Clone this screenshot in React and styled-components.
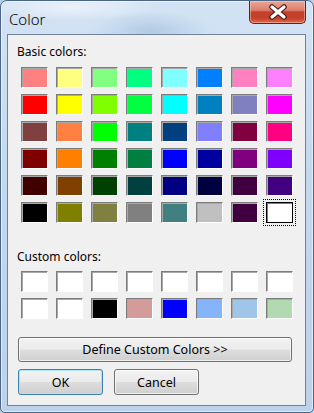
import React from 'react'
import styled, { createGlobalStyle } from 'styled-components';

const GlobalStyle = createGlobalStyle`
  html, body {
    margin: 0;
    padding: 0;
    background: #b9cfe6;
  }
  body {
    font-family: "Noto Sans", "Liberation Sans", sans-serif;
    font-size: 12px;
    color: #000;
  }
`;

const basic = [
  ['#ff8080', '#ffff80', '#80ff80', '#00ff80', '#80ffff', '#0080ff', '#ff80c0', '#ff80ff'],
  ['#ff0000', '#ffff00', '#80ff00', '#00ff40', '#00ffff', '#0080c0', '#8080c0', '#ff00ff'],
  ['#804040', '#ff8040', '#00ff00', '#008080', '#004080', '#8080ff', '#800040', '#ff0080'],
  ['#800000', '#ff8000', '#008000', '#008040', '#0000ff', '#0000a0', '#800080', '#8000ff'],
  ['#400000', '#804000', '#004000', '#004040', '#000080', '#000040', '#400040', '#400080'],
  ['#000000', '#808000', '#808040', '#808080', '#408080', '#c0c0c0', '#400040', '#ffffff'],
];

const custom = [
  ['#ffffff', '#ffffff', '#ffffff', '#ffffff', '#ffffff', '#ffffff', '#ffffff', '#ffffff'],
  ['#ffffff', '#ffffff', '#000000', '#d49b9b', '#0000ff', '#85b4fb', '#9fc6e9', '#b1dab0'],
];

const Window = styled.div`
  box-sizing: border-box;
  width: 314px;
  height: 413px;
  display: flex;
  flex-direction: column;
  padding: 0 7px 6px 6px;
  border: 1px solid #4a6684;
  border-radius: 7px 7px 5px 5px;
  background:
    radial-gradient(ellipse 90px 14px at 70px 6px, rgba(255,255,255,0.55), transparent),
    radial-gradient(ellipse 60px 20px at 150px 30px, rgba(150,180,215,0.5), transparent),
    linear-gradient(180deg, #d3e3f4 0%, #c4d8ee 40%, #bcd2ea 100%);
  box-shadow: inset 0 0 0 1px rgba(255,255,255,0.55);
  overflow: hidden;
`;

const TitleBar = styled.div`
  height: 33px;
  display: flex;
  justify-content: space-between;
  align-items: flex-start;
`;

const Title = styled.div`
  font-size: 15px;
  font-weight: 300;
  padding: 8px 0 0 2px;
  color: #000;
`;

const CloseButton = styled.div`
  width: 57px;
  height: 23px;
  box-sizing: border-box;
  display: flex;
  align-items: center;
  justify-content: center;
  border: 1px solid #5e2419;
  border-top: none;
  border-radius: 0 0 5px 5px;
  background: linear-gradient(180deg, #e9a797 0%, #dc7e6c 42%, #c3402a 50%, #c5412a 78%, #e0694c 100%);
  box-shadow: inset 0 0 0 1px rgba(255,220,210,0.45);
`;

const Client = styled.div`
  flex: 1;
  display: flex;
  flex-direction: column;
  align-items: flex-start;
  background: #f0f0f0;
  border: 1px solid #6f8298;
  padding: 9px 0 0 10px;
`;

const Label = styled.div`
  line-height: 15px;
  margin: ${p => p.$top || 0}px 0 0 -1px;
`;

const Grid = styled.div`
  display: grid;
  grid-template-columns: repeat(8, 27px);
  grid-auto-rows: 21px;
  column-gap: 8px;
  row-gap: 6px;
  margin: ${p => p.$top}px 0 0 3px;
`;

const Swatch = styled.div`
  box-sizing: border-box;
  background: ${p => p.$color};
  border: 1px solid;
  border-color: #7c7c7c #ffffff #ffffff #7c7c7c;
  box-shadow: inset 1px 1px 0 #a8a8a8;

  ${p => p.$selected && `
    border: 1px solid #000;
    box-shadow: inset 1px 1px 0 #7c7c7c;
    outline: 1px dotted #000;
    outline-offset: 2px;
  `}
`;

const Button = styled.div`
  box-sizing: border-box;
  width: ${p => p.$w}px;
  height: ${p => p.$h}px;
  display: flex;
  align-items: center;
  justify-content: center;
  font-size: 12.5px;
  border: 1px solid ${p => (p.$default ? '#3c7fb1' : '#707070')};
  border-radius: 3px;
  background: linear-gradient(180deg, #f2f2f2 0%, #ebebeb 48%, #dddddd 52%, #cfcfcf 100%);
  box-shadow: inset 0 0 0 1px ${p => (p.$default ? '#aee4f7' : 'rgba(255,255,255,0.7)')};
  color: #000;
`;

const ButtonRow = styled.div`
  display: flex;
  gap: 11px;
  margin-top: 7px;
`;

const Section = styled.div`
  margin-top: ${p => p.$top}px;
`;

const CloseIcon = () => (
  <svg width="20" height="16" viewBox="0 0 20 16">
    <path d="M4 3 L16 13 M16 3 L4 13" stroke="#4a1d16" strokeWidth="5.5" strokeLinecap="round" />
    <path d="M4 3 L16 13 M16 3 L4 13" stroke="#ffffff" strokeWidth="3.2" strokeLinecap="round" />
  </svg>
);

const App = () => {
  return (
    <>
      <GlobalStyle />
      <Window>
        <TitleBar>
          <Title>Color</Title>
          <CloseButton><CloseIcon /></CloseButton>
        </TitleBar>
        <Client>
          <Label>Basic colors:</Label>
          <Grid $top={8}>
            {basic.flat().map((c, i) => (
              <Swatch key={i} $color={c} $selected={i === 47} />
            ))}
          </Grid>
          <Label $top={26}>Custom colors:</Label>
          <Grid $top={7}>
            {custom.flat().map((c, i) => (
              <Swatch key={i} $color={c} />
            ))}
          </Grid>
          <Section $top={18}>
            <Button $w={274} $h={25}>Define Custom Colors &gt;&gt;</Button>
          </Section>
          <ButtonRow>
            <Button $w={85} $h={26} $default>OK</Button>
            <Button $w={85} $h={26}>Cancel</Button>
          </ButtonRow>
        </Client>
      </Window>
    </>
  )
}

export default App
